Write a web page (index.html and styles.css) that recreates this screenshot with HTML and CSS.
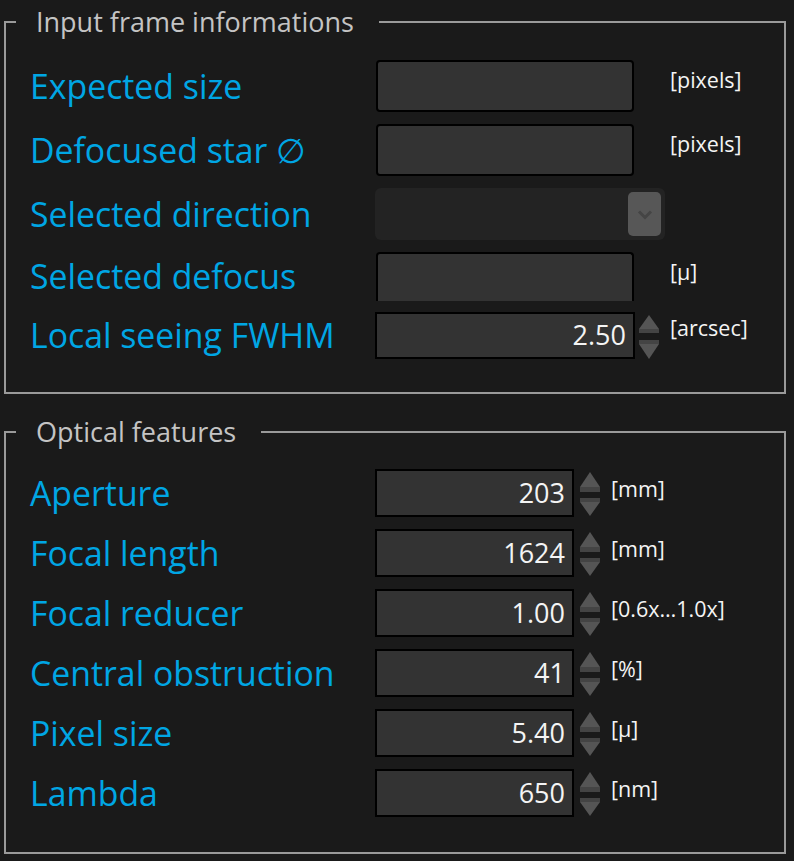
FILE: index.html
```html
<!DOCTYPE html>
<html>
<head>
<meta charset="utf-8">
<link rel="stylesheet" href="styles.css">
</head>
<body>
<fieldset class="group g1">
  <legend class="legend">Input frame informations</legend>
  <div class="rows">
    <div class="row r52">
      <span class="label">Expected size</span>
      <div class="field text"></div>
      <span class="spin-slot"></span>
      <span class="unit">[pixels]</span>
    </div>
    <div class="row r52">
      <span class="label">Defocused star ∅</span>
      <div class="field text"></div>
      <span class="spin-slot"></span>
      <span class="unit">[pixels]</span>
    </div>
    <div class="row r52">
      <span class="label">Selected direction</span>
      <div class="combo">
        <div class="combo-btn">
          <svg width="16" height="11" viewBox="0 0 16 11"><polyline points="2,2.5 8,8.5 14,2.5" fill="none" stroke="#454545" stroke-width="3"/></svg>
        </div>
      </div>
    </div>
    <div class="row r47">
      <span class="label">Selected defocus</span>
      <div class="field text cut"></div>
      <span class="spin-slot"></span>
      <span class="unit">[µ]</span>
    </div>
    <div class="row r48">
      <span class="label">Local seeing FWHM</span>
      <div class="field spinbox"><span class="value">2.50</span></div>
      <svg class="spin" width="20" height="48" viewBox="0 0 20 48"><polygon points="10,4 20,18 0,18" fill="#555"/><rect x="0" y="18" width="20" height="4" fill="#444"/><rect x="0" y="29" width="20" height="4" fill="#444"/><polygon points="0,33 20,33 10,48" fill="#555"/></svg>
      <span class="unit">[arcsec]</span>
    </div>
  </div>
</fieldset>

<fieldset class="group g2">
  <legend class="legend">Optical features</legend>
  <div class="rows">
    <div class="row r48">
      <span class="label">Aperture</span>
      <div class="field spinbox"><span class="value">203</span></div>
      <svg class="spin" width="20" height="48" viewBox="0 0 20 48"><polygon points="10,3 20,18 0,18" fill="#555"/><rect x="0" y="18" width="20" height="5" fill="#444"/><rect x="0" y="29" width="20" height="4" fill="#444"/><polygon points="0,33 20,33 10,47" fill="#555"/></svg>
      <span class="unit">[mm]</span>
    </div>
    <div class="row r48">
      <span class="label">Focal length</span>
      <div class="field spinbox"><span class="value">1624</span></div>
      <svg class="spin" width="20" height="48" viewBox="0 0 20 48"><polygon points="10,3 20,18 0,18" fill="#555"/><rect x="0" y="18" width="20" height="5" fill="#444"/><rect x="0" y="29" width="20" height="4" fill="#444"/><polygon points="0,33 20,33 10,47" fill="#555"/></svg>
      <span class="unit">[mm]</span>
    </div>
    <div class="row r48">
      <span class="label">Focal reducer</span>
      <div class="field spinbox"><span class="value">1.00</span></div>
      <svg class="spin" width="20" height="48" viewBox="0 0 20 48"><polygon points="10,3 20,18 0,18" fill="#555"/><rect x="0" y="18" width="20" height="5" fill="#444"/><rect x="0" y="29" width="20" height="4" fill="#444"/><polygon points="0,33 20,33 10,47" fill="#555"/></svg>
      <span class="unit">[0.6x…1.0x]</span>
    </div>
    <div class="row r48">
      <span class="label">Central obstruction</span>
      <div class="field spinbox"><span class="value">41</span></div>
      <svg class="spin" width="20" height="48" viewBox="0 0 20 48"><polygon points="10,3 20,18 0,18" fill="#555"/><rect x="0" y="18" width="20" height="5" fill="#444"/><rect x="0" y="29" width="20" height="4" fill="#444"/><polygon points="0,33 20,33 10,47" fill="#555"/></svg>
      <span class="unit">[%]</span>
    </div>
    <div class="row r48">
      <span class="label">Pixel size</span>
      <div class="field spinbox"><span class="value">5.40</span></div>
      <svg class="spin" width="20" height="48" viewBox="0 0 20 48"><polygon points="10,3 20,18 0,18" fill="#555"/><rect x="0" y="18" width="20" height="5" fill="#444"/><rect x="0" y="29" width="20" height="4" fill="#444"/><polygon points="0,33 20,33 10,47" fill="#555"/></svg>
      <span class="unit">[µ]</span>
    </div>
    <div class="row r48">
      <span class="label">Lambda</span>
      <div class="field spinbox"><span class="value">650</span></div>
      <svg class="spin" width="20" height="48" viewBox="0 0 20 48"><polygon points="10,3 20,18 0,18" fill="#555"/><rect x="0" y="18" width="20" height="5" fill="#444"/><rect x="0" y="29" width="20" height="4" fill="#444"/><polygon points="0,33 20,33 10,47" fill="#555"/></svg>
      <span class="unit">[nm]</span>
    </div>
  </div>
</fieldset>
</body>
</html>
```
FILE: styles.css
```css
html, body {
  margin: 0;
  padding: 0;
  background: #1a1a1a;
  width: 794px;
  height: 861px;
  overflow: hidden;
  font-family: "Open Sans", "Noto Sans", sans-serif;
}

.group {
  box-sizing: border-box;
  width: 782px;
  margin: 4px 0 0 4px;
  padding: 0;
  border: 2px solid #9a9a9a;
  min-width: 0;
}

.g2 {
  margin-top: 20px;
}

.legend {
  margin-left: 10px;
  padding: 0 25px 0 20px;
  height: 36px;
  line-height: 36px;
  font-size: 27px;
  color: #c4c4c4;
}

.rows {
  display: flex;
  flex-direction: column;
  gap: 12px;
  padding: 20px 0 33px 24px;
}

.g2 .rows {
  padding: 19px 0 35px 24px;
}

.row {
  display: flex;
  align-items: center;
}

.r52 { height: 52px; }
.r47 { height: 47px; }
.r48 { height: 48px; }

.label {
  width: 346px;
  flex: none;
  font-size: 33.8px;
  line-height: 40px;
  color: #00a6e4;
  white-space: nowrap;
}

.g2 .label {
  width: 345px;
}

.field {
  box-sizing: border-box;
  flex: none;
  background: #333333;
  border: 2px solid #000;
  display: flex;
  align-items: center;
  justify-content: flex-end;
}

.text {
  width: 258px;
  height: 52px;
  border-radius: 4px;
}

.text.cut {
  align-self: flex-start;
  height: 49px;
  border-bottom: none;
  border-radius: 4px 4px 0 0;
}

.spinbox {
  height: 48px;
  padding-right: 7px;
}

.g1 .spinbox {
  width: 260px;
  height: 47px;
  margin-left: -1px;
}

.g2 .spinbox {
  width: 199px;
}

.value {
  font-size: 27px;
  line-height: 36px;
  color: #f4f4f4;
}

.spin-slot {
  flex: none;
  width: 25px;
}

.spin {
  flex: none;
  display: block;
  margin-left: 4px;
}

.g2 .spin {
  margin-left: 6px;
}

.unit {
  align-self: flex-start;
  margin-top: 6px;
  margin-left: 11px;
  font-size: 21.5px;
  line-height: 27px;
  color: #f4f4f4;
  white-space: nowrap;
}

.g1 .r48 .unit {
  margin-top: 3px;
}

.combo {
  box-sizing: border-box;
  flex: none;
  width: 290px;
  height: 52px;
  margin-left: -1px;
  background: #232323;
  border-radius: 6px;
  display: flex;
  justify-content: flex-end;
  align-items: center;
  padding-right: 4px;
}

.combo-btn {
  width: 33px;
  height: 44px;
  background: #575757;
  border-radius: 5px;
  display: flex;
  align-items: center;
  justify-content: center;
}
```
